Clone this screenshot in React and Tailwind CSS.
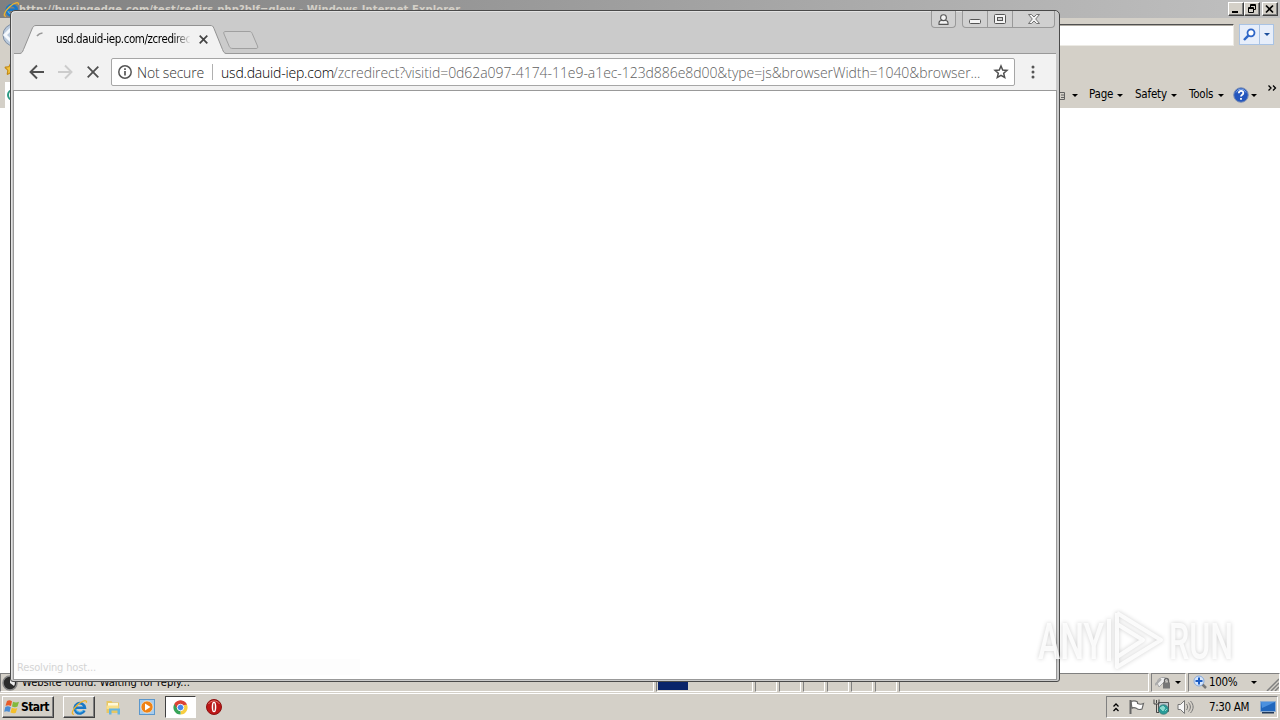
import React from 'react';
import { Star } from 'lucide-react';

const UI_FONT = "font-['DejaVu_Sans_Condensed','DejaVu_Sans',sans-serif]";

function Caret({ className = '' }) {
  return (
    <svg className={`shrink-0 ${className}`} width="6" height="3" viewBox="0 0 6 3">
      <path d="M0 0h6L3 3z" fill="#000" />
    </svg>
  );
}

function IeLogo({ size = 20 }) {
  return (
    <svg className="shrink-0" width={size} height={size} viewBox="0 0 20 20" fill="none">
      <path d="M15.8 13.5a6 6 0 1 1 .5-3.2H6" stroke="#1878c8" strokeWidth="3.2" />
      <path d="M14.8 12.8a5 5 0 0 1-9.2-.8" stroke="#4bb5ee" strokeWidth="1.2" />
      <path d="M3.5 18C-.5 18.5 2 12 7.5 7S19.500 0 18 4.500" stroke="#eeb42c" strokeWidth="1.6" />
    </svg>
  );
}

function ClassicButton({ children }) {
  return (
    <div className="flex h-[14px] w-4 items-center justify-center border border-t-white border-l-white border-r-[#404040] border-b-[#404040] bg-[#d4d0c8] shadow-[inset_-1px_-1px_0_#808080]">
      {children}
    </div>
  );
}

function IeTitleBar() {
  return (
    <div className="flex h-[18px] shrink-0 items-center bg-gradient-to-r from-[#808080] to-[#c0c0c0] pr-[2px] pl-[3px]">
      <IeLogo size={17} />
      <span className="-ml-px pt-px text-[11px] leading-[18px] font-bold tracking-[0.15px] whitespace-nowrap text-[#d4d0c8]">
        http://buyingedge.com/test/redirs.php?blf=glew - Windows Internet Explorer
      </span>
      <div className="ml-auto flex">
        <ClassicButton>
          <svg width="12" height="10" viewBox="0 0 12 10"><path d="M2 7h6v2H2z" /></svg>
        </ClassicButton>
        <ClassicButton>
          <svg width="12" height="10" viewBox="0 0 12 10" fill="none" stroke="#000">
            <path d="M4.500 3V.5h5v5H8M4 1.500h6M2.500 3.500h5v5h-5zM2 4.500h6" />
          </svg>
        </ClassicButton>
        <div className="ml-[2px]">
          <ClassicButton>
            <svg width="12" height="10" viewBox="0 0 12 10" fill="none" stroke="#000" strokeWidth="1.7">
              <path d="M2 1.500l7 7M9 1.500l-7 7" />
            </svg>
          </ClassicButton>
        </div>
      </div>
    </div>
  );
}

function IeToolbars() {
  return (
    <div className="flex h-[90px] shrink-0 flex-col bg-[#d4d0c8]">
      <div className="flex h-[38px] pt-[6px]">
        <svg className="ml-[2px] shrink-0" width="25" height="28" viewBox="0 0 25 28">
          <circle cx="12" cy="11" r="11" fill="#b9c9dc" stroke="#7d8da2" />
          <path d="M9 5l-6 6 6 6" fill="none" stroke="#f4f8fc" strokeWidth="3" />
        </svg>
        <div className="h-[22px] flex-1 border border-t-[#505050] border-l-[#505050] border-r-[#eceae4] border-b-[#eceae4] bg-white shadow-[inset_0_1px_0_#b0aca4]" />
        <div className="mr-[6px] ml-[5px] flex h-[21px] w-[35px] border border-[#a9c3e4] bg-[#e7eefa]">
          <div className="flex w-5 items-center justify-center border-r border-[#a9c3e4]">
            <svg width="13" height="13" viewBox="0 0 13 13" fill="none" stroke="#2f67c8" strokeWidth="1.8">
              <circle cx="8" cy="4.800" r="3.500" fill="#fff" />
              <path d="M5.300 7.600L1 12" strokeWidth="2.500" />
            </svg>
          </div>
          <div className="flex flex-1 items-center justify-center">
            <svg width="6" height="3" viewBox="0 0 6 3"><path d="M0 0h6L3 3z" fill="#1c4f9c" /></svg>
          </div>
        </div>
      </div>
      <div className="flex h-[26px] pt-[6px] pl-1">
        <Star size={14} fill="#f3c33c" color="#c48b17" />
      </div>
      <div className="flex h-[26px] items-center">
        <div className="ml-[5px] flex h-full w-6 items-center bg-white pl-[2px]">
          <div className="size-3 rounded-full border-2 border-[#2b9a83]" />
        </div>
        <svg className="ml-[1028px] shrink-0" width="10" height="12" viewBox="0 0 10 12">
          <path d="M0 3.500h7.500v7H0M4 6h4M4 8.500h3" fill="none" stroke="#626262" />
        </svg>
        <Caret className="ml-[5px]" />
        <div className={`flex items-center text-[11.5px] tracking-[-0.2px] ${UI_FONT}`}>
          <span className="ml-[11px] w-[25px]">Page</span>
          <Caret className="ml-[3px]" />
          <span className="ml-3 w-[33px]">Safety</span>
          <Caret className="ml-[3px]" />
          <span className="ml-3 w-[26px]">Tools</span>
          <Caret className="ml-[3px]" />
        </div>
        <svg className="ml-[9px] shrink-0" width="16" height="16" viewBox="0 0 16 16">
          <circle cx="8" cy="8" r="7.300" fill="#2456bd" stroke="#8293b5" />
          <path d="M3 5.500a5.400 5.400 0 0 1 10 0" fill="none" stroke="#7da5e8" />
          <path d="M5.800 6.200c0-3.200 4.700-2.800 4.500-.1C10.200 7.800 8 7.600 8 9.600M8 11v1.800" fill="none" stroke="#fff" strokeWidth="1.800" />
        </svg>
        <Caret className="ml-[2px]" />
        <svg className="mb-[14px] ml-[11px] shrink-0" width="9" height="6" viewBox="0 0 9 6" fill="none" stroke="#000" strokeWidth="1.300">
          <path d="M.5.500L3 3 .500 5.500M5 .500L7.500 3 5 5.500" />
        </svg>
      </div>
    </div>
  );
}

function StatusPane({ className, children }) {
  return (
    <div className={`flex h-[19px] shrink-0 items-center border border-t-[#808080] border-l-[#808080] border-r-white border-b-white ${className}`}>
      {children}
    </div>
  );
}

function IeStatusBar() {
  return (
    <div className="flex h-[20px] shrink-0 border-b border-[#d4d0c8] bg-[#d4d0c8]">
      <StatusPane className="w-[654px] pl-px">
        <svg className="shrink-0" width="16" height="16" viewBox="0 0 16 16">
          <circle cx="8" cy="8" r="7" fill="#2c2c2c" stroke="#888" strokeWidth="1.5" />
          <path d="M8 3v5l4 3A6 6 0 0 0 8 2z" fill="#eee" />
        </svg>
        <span className={`ml-1 pt-[2px] text-[11px] tracking-[0.03px] whitespace-nowrap ${UI_FONT}`}>
          Website found. Waiting for reply...
        </span>
      </StatusPane>
      <StatusPane className="ml-[2px] w-[97px] px-px">
        <div className="h-[15px] w-[30px] bg-[#0a246a]" />
      </StatusPane>
      {[0, 1, 2, 3, 4, 5].map((pane) => (
        <StatusPane key={pane} className="ml-[2px] w-[22px]" />
      ))}
      <StatusPane className="ml-[2px] w-[250px]" />
      <StatusPane className="ml-[2px] w-[35px] pl-[3px]">
        <svg className="shrink-0" width="17" height="15" viewBox="0 0 17 15">
          <path d="M2 8a6 6 0 0 1 11-3l-4 2-5 5z" fill="#efefef" stroke="#a5a5a5" />
          <path d="M0 10l6-6" stroke="#aaa" strokeWidth="2" />
          <path d="M9.500 8V5.500a2 2 0 0 1 4 0V8" fill="none" stroke="#666" strokeWidth="1.300" />
          <path d="M8 7.500h7v6H8z" fill="#777" />
        </svg>
        <Caret className="ml-[3px]" />
      </StatusPane>
      <StatusPane className="ml-[2px] flex-1 pl-1">
        <svg className="shrink-0" width="14" height="15" viewBox="0 0 14 15">
          <path d="M8 8l5 5" stroke="#777" strokeWidth="2.500" />
          <circle cx="6" cy="6" r="5" fill="#d7e6fb" stroke="#86a9dc" />
          <path d="M6 2.500v7M2.500 6h7" stroke="#1b5cc4" strokeWidth="2" />
        </svg>
        <span className={`ml-[2px] w-[29px] pt-px text-[11.5px] tracking-[-0.3px] ${UI_FONT}`}>100%</span>
        <Caret className="ml-[13px]" />
        <svg className="mt-1 ml-auto" width="13" height="13" viewBox="0 0 13 13" stroke="#808080" strokeWidth="1.500">
          <path d="M1 13L13 1M5 13l8-8M9 13l4-4" />
        </svg>
      </StatusPane>
    </div>
  );
}

function ChromeTab() {
  return (
    <div className="relative -mb-px h-[29px] w-[206px] shrink-0">
      <svg className="absolute inset-0" width="206" height="29" viewBox="0 0 206 29">
        <path d="M0 28.500C2 28 2.500 27 3.500 24.500L12 4C13 1.500 14 .500 16 .500h174c2.500 0 3 .5 4 3l8.500 21c1 2.500 1.500 3.500 3.500 4V29H0z" fill="#f2f2f2" />
        <path d="M0 28.500C2 28 2.500 27 3.500 24.500L12 4C13 1.500 14 .500 16 .500h174c2.500 0 3 .5 4 3l8.500 21c1 2.500 1.500 3.500 3.500 4" fill="none" stroke="#929292" />
      </svg>
      <div className="relative flex h-full items-center pl-[16px]">
        <svg className="mb-[2px] shrink-0" width="16" height="16" viewBox="0 0 16 16" fill="none" stroke="#999" strokeWidth="1.700">
          <path d="M1 5a8 8 0 0 1 5.500-3" />
        </svg>
        <span className={`ml-[4px] w-[134px] overflow-hidden bg-gradient-to-r from-black from-85% to-[#e8e8e8] bg-clip-text text-[11.5px] tracking-[-0.42px] whitespace-nowrap text-transparent ${UI_FONT}`}>
          usd.dauid-iep.com/zcredirect
        </span>
        <svg className="ml-[9px] shrink-0" width="9" height="9" viewBox="0 0 9 9" stroke="#444" strokeWidth="1.700">
          <path d="M.7.700l7.600 7.600M8.300.700L.7 8.300" />
        </svg>
      </div>
    </div>
  );
}

function ChromeWindowButtons() {
  return (
    <div className="mr-[4px] ml-auto flex h-[17px] text-[#555]">
      <div className="mr-[6px] flex w-[25px] items-center justify-center rounded-b-[4px] border border-t-0 border-[#999] bg-[#d0d0d0]">
        <svg width="11" height="11" viewBox="0 0 11 11" fill="#f4f4f4" stroke="#555" strokeWidth="1.100">
          <path d="M1 10.400V9c0-1.500 1-2.500 2.500-2.500h4C9 6.500 10 7.500 10 9v1.400z" />
          <circle cx="5.500" cy="3.700" r="2.900" />
        </svg>
      </div>
      <div className="flex w-[93px] rounded-b-[4px] border border-t-0 border-[#999] bg-[#d0d0d0]">
        <div className="flex w-[25px] items-center justify-center border-r border-[#999] pt-[5px]">
          <svg width="12" height="5" viewBox="0 0 12 5"><rect x=".5" y=".5" width="11" height="4" rx="1" fill="#f4f4f4" stroke="#555" /></svg>
        </div>
        <div className="flex w-[25px] items-center justify-center border-r border-[#999]">
          <svg width="12" height="10" viewBox="0 0 12 10" fill="none" stroke="#555">
            <rect x=".5" y=".5" width="11" height="9" rx="1" fill="#f4f4f4" />
            <rect x="3.500" y="3.500" width="5" height="3" fill="#d0d0d0" />
          </svg>
        </div>
        <div className="flex flex-1 items-center justify-center">
          <svg width="12" height="10" viewBox="0 0 12 10">
            <path d="M.5.500h3L6 3 8.500.500h3L7.700 5l3.800 4.500h-3L6 7 3.500 9.500h-3L4.300 5z" fill="#f4f4f4" stroke="#666" strokeWidth=".9" />
          </svg>
        </div>
      </div>
    </div>
  );
}

function ChromeToolbar() {
  return (
    <div className="mr-[3px] ml-[3px] flex h-[37px] shrink-0 items-center border-b border-[#b4b4b4] bg-[#f2f2f2]">
      <svg className="ml-[15px] shrink-0" width="16" height="16" viewBox="0 0 16 16" fill="none" stroke="#505050" strokeWidth="1.900">
        <path d="M15 8H2M8 1.500L1.500 8 8 14.500" />
      </svg>
      <svg className="ml-3 shrink-0" width="16" height="16" viewBox="0 0 16 16" fill="none" stroke="#ccc" strokeWidth="1.900">
        <path d="M1 8h13M8 1.500L14.500 8 8 14.500" />
      </svg>
      <svg className="ml-[14px] shrink-0" width="12" height="12" viewBox="0 0 12 12" stroke="#505050" strokeWidth="1.800">
        <path d="M.7.700l10.600 10.600M11.300.700L.7 11.300" />
      </svg>
      <div className="ml-3 flex h-[28px] w-[904px] shrink-0 items-center rounded-[2px] border border-[#a6a6a6] bg-white font-['Open_Sans','Noto_Sans',sans-serif] text-[14px] font-light whitespace-nowrap">
        <svg className="ml-[6px] shrink-0" width="14" height="14" viewBox="0 0 14 14" fill="none" stroke="#555" strokeWidth="1.500">
          <circle cx="7" cy="7" r="6.200" />
          <path d="M7 6v4.500M7 3.300v1.600" strokeWidth="1.700" />
        </svg>
        <span className="ml-[5px] w-[67px] tracking-[-0.2px] text-[#333]">Not secure</span>
        <div className="mx-[8px] h-4 w-px shrink-0 bg-[#b0b0b0]" />
        <span className="w-[112px] tracking-[-0.2px] text-black">usd.dauid-iep.com</span>
        <span className="w-[650px] tracking-[-0.06px] text-[#606060]">
          /zcredirect?visitid=0d62a097-4174-11e9-a1ec-123d886e8d00&amp;type=js&amp;browserWidth=1040&amp;browser...
        </span>
        <svg className="ml-[10px] shrink-0" width="16" height="16" viewBox="0 0 16 16" fill="none" stroke="#505050" strokeWidth="1.500">
          <path d="M8 2l1.700 4 4.300.400-3.300 2.900 1 4.200L8 11.300l-3.700 2.200 1-4.200L2 6.400 6.300 6z" />
        </svg>
      </div>
      <svg className="ml-[16px] shrink-0" width="4" height="14" viewBox="0 0 4 14" fill="#555">
        <circle cx="2" cy="2" r="1.500" />
        <circle cx="2" cy="7" r="1.500" />
        <circle cx="2" cy="12" r="1.500" />
      </svg>
    </div>
  );
}

function ChromeWindow() {
  return (
    <div className="absolute top-[10px] left-[10px] flex h-[672px] w-[1050px] flex-col overflow-hidden rounded-[5px] rounded-b-[3px] border border-[#4a4a4a] bg-[#cbcbcb] shadow-[inset_1px_1px_0_#e2e2e2]">
      <div className="mx-[3px] flex h-[43px] shrink-0 items-start border-b border-[#999]">
        <div className="flex h-full items-end pl-[6px]">
          <ChromeTab />
          <svg className="mb-[4px] -ml-[3px]" width="36" height="18" viewBox="0 0 36 18">
            <path d="M3 .500h23c2 0 2.500.500 3.200 2l5.300 12.500c.8 2-.2 2.500-1.500 2.500H10c-2 0-3-.500-3.700-2L1 3C.200 1 1 .500 3 .500z" fill="#d0d0d0" stroke="#a0a0a0" />
          </svg>
        </div>
        <div className="-mr-[3px] ml-auto">
          <ChromeWindowButtons />
        </div>
      </div>
      <ChromeToolbar />
      <div className="mx-[3px] mb-[2px] flex flex-1 flex-col justify-end bg-white outline outline-[#999]">
        <div className={`mb-[4px] h-[16px] w-[346px] bg-[#fdfdfd] pl-[3px] text-[11px] leading-[18px] tracking-[-0.15px] text-[#d4d4d4] ${UI_FONT}`}>
          Resolving host...
        </div>
      </div>
    </div>
  );
}

function Taskbar() {
  return (
    <div className="flex h-[27px] shrink-0 items-center border-t border-white bg-[#d4d0c8] pl-[2px]">
      <div className={`flex h-[22px] w-[52px] items-center border border-t-white border-l-white border-r-[#404040] border-b-[#404040] pl-px shadow-[inset_-1px_-1px_0_#808080] ${UI_FONT}`}>
        <svg className="shrink-0" width="16" height="16" viewBox="0 0 16 16">
          <path d="M3 2c2-1 3-.800 5 .200L7 7C5 6 4 6 1.500 6.800z" fill="#e85c28" />
          <path d="M9 2.700c2 1 4 1 6 0L13.500 7.500c-2 1-3.500.700-5.500 0z" fill="#82b93d" />
          <path d="M1.300 8c2-1 3.500-.800 5.500.2L5.500 13c-2-1-3.500-1-5.300-.200z" fill="#4a8cd4" />
          <path d="M7.800 8.700c2 1 3.700 1 5.500.2l-1.500 4.800c-2 1-3.500.600-5.300-.200z" fill="#f4bf2b" />
        </svg>
        <span className="ml-px text-[12px] font-bold tracking-[-0.6px]">Start</span>
      </div>
      <div className="ml-[9px] flex h-[22px] w-[32px] items-center justify-center border border-t-white border-l-white border-r-[#404040] border-b-[#404040] shadow-[inset_-1px_-1px_0_#808080]">
        <IeLogo size={17} />
      </div>
      <svg className="ml-[10px] shrink-0" width="17" height="17" viewBox="0 0 17 17">
        <path d="M1.500 2h5l1 1.500H14V14H1.500z" fill="#e8c763" />
        <path d="M3 4h10v4H3z" fill="#fff9d8" />
        <path d="M1.500 6.500h12V10h-12z" fill="#f8df8a" />
        <path d="M4 15.500V9.500h11v6h-2.500v-4h-6v4z" fill="#65b6e3" />
      </svg>
      <svg className="ml-[17px] shrink-0" width="16" height="16" viewBox="0 0 16 16">
        <rect x=".5" y=".5" width="15" height="15" fill="#a7cced" stroke="#5b97cc" />
        <circle cx="8" cy="8" r="6" fill="#ef8215" stroke="#fff3dd" strokeWidth=".6" />
        <path d="M6 4.500v7L11.500 8z" fill="#fff" />
      </svg>
      <div className="ml-[10px] flex h-[22px] w-[31px] items-center justify-center border border-t-[#404040] border-l-[#404040] border-r-white border-b-white bg-white">
        <svg width="15" height="15" viewBox="0 0 16 16">
          <path d="M8 8L1.500 4.200A7.500 7.500 0 0 1 14.500 4.200z" fill="#dc4335" />
          <path d="M8 8L14.500 4.200A7.500 7.500 0 0 1 8 15.500z" fill="#f8ce40" />
          <path d="M8 8v7.500A7.500 7.500 0 0 1 1.500 4.200z" fill="#37a457" />
          <path d="M1.500 4.200L5 10l3-5h6.800l-.5-1A7.500 7.500 0 0 0 1.500 4.200z" fill="#dc4335" />
          <circle cx="8" cy="8" r="3.500" fill="#4688ed" stroke="#fff" />
        </svg>
      </div>
      <svg className="ml-[10px] shrink-0" width="16" height="16" viewBox="0 0 16 16">
        <circle cx="8" cy="8" r="7.500" fill="#bd1717" stroke="#8c1111" />
        <path d="M2.500 5a6.500 6.500 0 0 1 11 0" fill="none" stroke="#dc7770" />
        <ellipse cx="8" cy="8" rx="2.300" ry="5.300" fill="#fff" />
        <ellipse cx="8" cy="8" rx=".8" ry="4" fill="#aa1414" />
      </svg>
      <div className="mr-[2px] ml-auto flex h-[22px] w-[172px] items-center border border-t-[#808080] border-l-[#808080] border-r-white border-b-white pl-[6px]">
        <svg width="6" height="9" viewBox="0 0 6 9" fill="none" stroke="#000" strokeWidth="1.300">
          <path d="M.5 3.500L3 1l2.500 2.500M.5 8L3 5.500 5.500 8" />
        </svg>
        <svg className="ml-[10px] shrink-0" width="17" height="16" viewBox="0 0 17 16" fill="#fff" stroke="#666" strokeWidth="1.100">
          <path d="M2 2.500c3-1.200 5-.500 6.500.500v1.500c2 1 4 1 6 0L13 10c-2 .8-4.200.5-5.500-.700-1.800-.8-3.500-.8-4.500 0z" />
          <path d="M1.500 1v14" strokeWidth="2" />
        </svg>
        <svg className="ml-[7px] shrink-0" width="17" height="16" viewBox="0 0 17 16">
          <path d="M5.500 3.500h10v9h-10z" fill="#b7c4ca" stroke="#555" />
          <path d="M1 .500v4.500h5V.500M3.500 1v3M3.500 5v8.500H6" fill="none" stroke="#444" />
          <circle cx="10.500" cy="10.500" r="4.800" fill="#299c99" stroke="#38716f" strokeWidth=".7" />
          <path d="M7 9l3-2 2 2-2 3zM12 12l2-2" fill="#8bdacd" stroke="#8bdacd" />
        </svg>
        <svg className="ml-[7px] shrink-0" width="17" height="16" viewBox="0 0 17 16" fill="none" stroke="#777">
          <path d="M1 5.500h2.500L7.500 1.500v13l-4-4H1z" fill="#f7f7f7" />
          <path d="M9.500 5c1.500 2 1.500 4 0 6M11.500 3.500c2.500 3 2.500 6 0 9M13.500 2c3.500 4 3.500 8 0 12" />
        </svg>
        <span className={`ml-[15px] w-[42px] pt-px text-[11.5px] tracking-[-0.35px] whitespace-nowrap ${UI_FONT}`}>7:30 AM</span>
        <svg className="ml-[9px] shrink-0" width="16" height="13" viewBox="0 0 16 13">
          <path d="M.5.500h15v10H.500z" fill="#2167bd" stroke="#8aabd0" />
          <path d="M1 1h14L2 7z" fill="#4b91df" />
          <path d="M2 11h12v1.500H2z" fill="#203859" />
        </svg>
      </div>
    </div>
  );
}

// Translucent recording mark laid over the whole desktop.
function Watermark() {
  return (
    <div className="pointer-events-none absolute top-[600px] left-[1034px]">
      <svg className="overflow-visible drop-shadow-[0_0_2px_rgba(0,0,0,0.22)]" width="210" height="80" viewBox="0 0 210 80">
        <g fontFamily="Roboto, sans-serif" fontSize="50" fontWeight="500" fill="#fff" fillOpacity=".85">
          <text x="4" y="59" textLength="66" lengthAdjust="spacingAndGlyphs">ANY</text>
          <text x="135" y="59" textLength="64" lengthAdjust="spacingAndGlyphs">RUN</text>
        </g>
        <g fill="none" strokeLinejoin="round" stroke="#fff" strokeOpacity=".85" strokeWidth="4">
          <path d="M83 13l44 27-44 27V24l26 16-26 17V13M75 61V19" />
        </g>
      </svg>
    </div>
  );
}

export default function App() {
  return (
    <div className="relative flex h-[720px] w-[1280px] flex-col overflow-hidden bg-[#d4d0c8] font-['DejaVu_Sans_Condensed','DejaVu_Sans',sans-serif] text-black">
      <IeTitleBar />
      <IeToolbars />
      <div className="flex-1 bg-white" />
      <IeStatusBar />
      <Taskbar />
      <ChromeWindow />
      <Watermark />
    </div>
  );
}
